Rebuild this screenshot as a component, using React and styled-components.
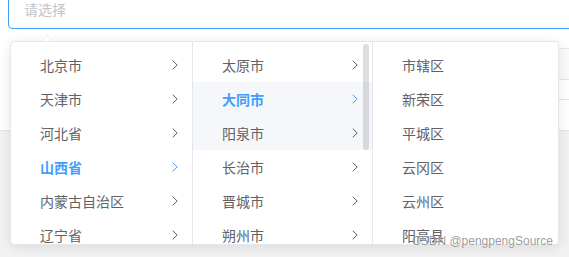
import styled, { createGlobalStyle } from "styled-components";

const GlobalStyle = createGlobalStyle`
    * {
        box-sizing: border-box;
    }
    body {
        margin: 0;
        overflow: hidden;
        background: #ffffff;
        font-family: "Helvetica Neue", "Liberation Sans", "Noto Sans CJK SC", sans-serif;
    }
`;

const provinces = ["北京市", "天津市", "河北省", "山西省", "内蒙古自治区", "辽宁省"];
const cities = ["太原市", "大同市", "阳泉市", "长治市", "晋城市", "朔州市"];
const districts = ["市辖区", "新荣区", "平城区", "云冈区", "云州区", "阳高县"];

const Page = styled.div`
    position: relative;
    width: 569px;
    height: 257px;
    display: flex;
    flex-direction: column;
    overflow: hidden;
`;

const Input = styled.div`
    flex: none;
    margin: -11px 0 0 8px;
    width: 600px;
    height: 40px;
    padding: 0 15px;
    display: flex;
    align-items: center;
    border: 1px solid #409eff;
    border-radius: 4px;
    color: #c0c4cc;
    font-size: 14px;
    font-family: "Noto Sans CJK SC", sans-serif;
`;

const Table = styled.div`
    flex: none;
    margin: 19px 0 0 20px;
    display: flex;
    flex-direction: column;
`;

const TableRow = styled.div`
    height: ${(p) => p.$h}px;
    border-top: 1px solid #e3e5ea;
    background: ${(p) => (p.$head ? "#fafafa" : "#ffffff")};
`;

const Section = styled.div`
    flex: 1;
    border-top: 1px solid #e3e5ea;
    background: #f2f2f2;
`;

const Popper = styled.div`
    position: absolute;
    top: 41px;
    left: 10px;
`;

const Arrow = styled.div`
    position: absolute;
    top: -6px;
    left: 31px;
    width: 0;
    height: 0;
    border-left: 6px solid transparent;
    border-right: 6px solid transparent;
    border-bottom: 6px solid #e4e7ed;
    &::after {
        content: "";
        position: absolute;
        top: 1px;
        left: -5px;
        border-left: 5px solid transparent;
        border-right: 5px solid transparent;
        border-bottom: 5px solid #ffffff;
    }
`;

const Panel = styled.div`
    width: 549px;
    height: 204px;
    display: flex;
    background: #ffffff;
    border: 1px solid #e4e7ed;
    border-radius: 4px;
    box-shadow: 0 2px 12px 0 rgba(0, 0, 0, 0.1);
    overflow: hidden;
`;

const Menu = styled.div`
    position: relative;
    flex: none;
    width: ${(p) => p.$w}px;
    height: 100%;
    padding: 6px 0;
    overflow: hidden;
    border-right: ${(p) => (p.$last ? "none" : "1px solid #e4e7ed")};
`;

const Node = styled.div`
    height: 34px;
    padding: 0 14px 0 29px;
    display: flex;
    align-items: center;
    justify-content: space-between;
    font-size: 14px;
    font-family: "Noto Sans CJK SC", sans-serif;
    color: ${(p) => (p.$active ? "#409eff" : "#606266")};
    font-weight: ${(p) => (p.$active ? 700 : 400)};
    background: ${(p) => (p.$hover ? "#f5f7fa" : "transparent")};
`;

const Scrollbar = styled.div`
    position: absolute;
    top: 2px;
    right: 3px;
    width: 6px;
    height: 106px;
    border-radius: 3px;
    background: rgba(144, 147, 153, 0.3);
`;

const Watermark = styled.div`
    position: absolute;
    right: 16px;
    bottom: 9px;
    font-size: 12px;
    font-family: "Liberation Sans", sans-serif;
    color: rgba(110, 110, 110, 0.7);
    text-shadow: 0 0 1px rgba(255, 255, 255, 0.8);
`;

function Chevron({ color }) {
    return (
        <svg width="6" height="10" viewBox="0 0 6 10">
            <polyline points="0.7,0.7 5.2,5 0.7,9.3" fill="none" stroke={color} strokeWidth="1" />
        </svg>
    );
}

function CascaderMenu({ items, width, active, hover, last, leaf, scroll }) {
    return (
        <Menu $w={width} $last={last}>
            {items.map((item) => {
                const isActive = item === active;
                return (
                    <Node key={item} $active={isActive} $hover={hover.includes(item)}>
                        <span>{item}</span>
                        {!leaf && <Chevron color={isActive ? "#409eff" : "#606266"} />}
                    </Node>
                );
            })}
            {scroll && <Scrollbar />}
        </Menu>
    );
}

export default function App() {
    return (
        <>
            <GlobalStyle />
            <Page>
                <Input>请选择</Input>
                <Table>
                    <TableRow $h={31} $head />
                    <TableRow $h={20} />
                    <TableRow $h={31} />
                </Table>
                <Section />
                <Popper>
                    <Arrow />
                    <Panel>
                        <CascaderMenu items={provinces} width={182} active="山西省" hover={[]} />
                        <CascaderMenu items={cities} width={180} active="大同市" hover={["大同市", "阳泉市"]} scroll />
                        <CascaderMenu items={districts} width={185} hover={[]} last leaf />
                    </Panel>
                </Popper>
                <Watermark>CSDN @pengpengSource</Watermark>
            </Page>
        </>
    );
}
